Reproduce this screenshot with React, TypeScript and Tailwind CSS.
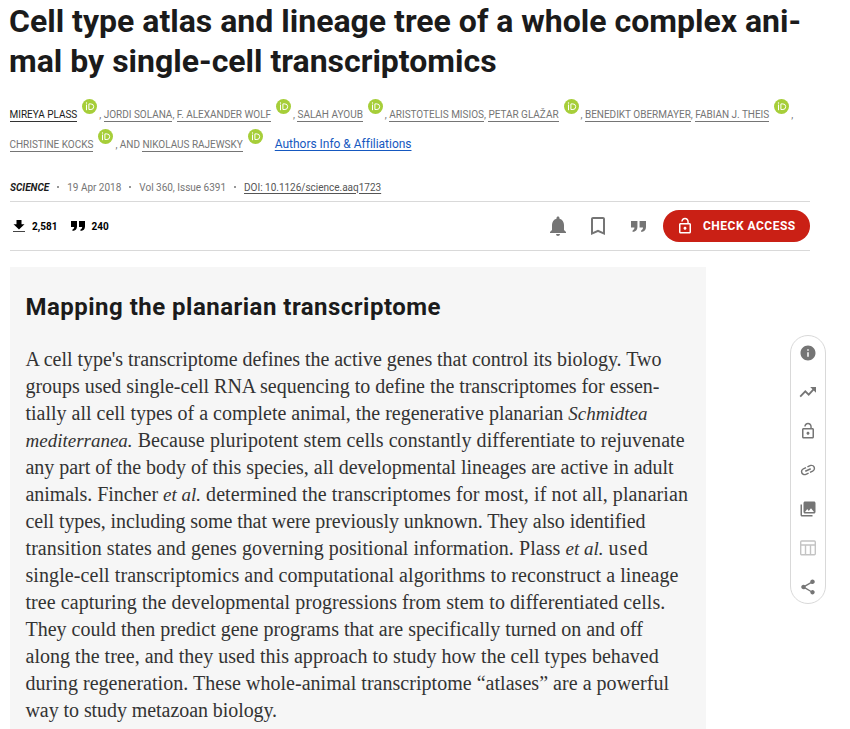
import React from "react";
import {
  MdBookmarkBorder,
  MdInfo,
  MdInsertLink,
  MdLockOpen,
  MdNotifications,
  MdPhotoLibrary,
  MdShare,
} from "react-icons/md";

function Orcid() {
  return (
    <svg viewBox="0 0 15 15" className="mb-[17px] ml-[5px] mr-0.5 size-[15px] shrink-0">
      <circle cx="7.5" cy="7.5" r="7.5" fill="#a6ce39" />
      <g fill="none" stroke="#fff">
        <path d="M4.5 5.6v5.6" strokeWidth="1" />
        <path d="M6.9 4.9h2a2.7 2.7 0 0 1 0 5.6h-2z" strokeWidth="1" />
      </g>
      <circle cx="4.5" cy="4" r="0.65" fill="#fff" />
    </svg>
  );
}

function Author({ name, orcid, last, dark }: { name: string; orcid?: boolean; last?: boolean; dark?: boolean }) {
  return (
    <>
      <a className={dark ? "border-b border-[#333] leading-3 text-[#1b1b1b]" : "border-b border-[#757575] leading-3"}>{name}</a>
      {orcid && <Orcid />}
      {!last && <span className="leading-3">,&nbsp;</span>}
    </>
  );
}

function Quotes({ className }: { className: string }) {
  return (
    <svg viewBox="0 0 14 10" preserveAspectRatio="none" className={className} fill="currentColor">
      <path d="M0 0h6v5.4C6 8 4.4 9.700 1.500 10V8.600C2.700 8 3.200 7.200 3.200 6H0z" />
      <path d="M8 0h6v5.400C14 8 12.400 9.700 9.500 10V8.600C10.700 8 11.200 7.200 11.200 6H8z" />
    </svg>
  );
}

function Download() {
  return (
    <svg viewBox="0 0 12 13" className="h-[13px] w-3">
      <path d="M3.500 0h5v4.200H11.500L6 9.500L0.500 4.200H3.500z" fill="#000" />
      <path d="M0 11.500h12" stroke="#444" />
    </svg>
  );
}

function Trend() {
  return (
    <svg viewBox="0 0 18 18" fill="none" stroke="currentColor" strokeWidth="1.8">
      <path d="M1.200 13.600L6.300 8.300L9.700 11.600L15 5.800" />
      <path d="M11.200 4h5.800v5.800z" fill="currentColor" stroke="none" />
    </svg>
  );
}

function Table() {
  return (
    <svg viewBox="0 0 16 16" className="size-4" fill="none" stroke="#c4c4c4" strokeWidth="1.400">
      <rect x="0.700" y="1" width="14.600" height="13.800" rx="1" />
      <path d="M1 5h14M5.500 5v9.500M10.500 5v9.500" />
    </svg>
  );
}

function Dot() {
  return <span className="mx-2 size-0.5 rounded-full bg-[#757575]" />;
}

function I({ children }: { children: React.ReactNode }) {
  return <em className="text-[19px] tracking-normal">{children}</em>;
}

export default function App() {
  return (
    <main className="relative h-[729px] w-[850px] overflow-hidden bg-white pl-2.5 font-['Roboto',sans-serif] text-[#757575]">
      <h1 className="-ml-px whitespace-nowrap pt-px text-[32px] font-bold leading-10 text-[#1b1b1b]">
        Cell type atlas and lineage tree of a whole complex ani-
        <br />
        mal by single-cell transcriptomics
      </h1>

      <section className="mt-[19px] whitespace-nowrap text-[10px] tracking-[-0.02px]">
        <div className="-ml-[0.5px] flex h-[30px] items-center">
          <Author name="MIREYA PLASS" orcid dark />
          <Author name="JORDI SOLANA" />
          <Author name="F. ALEXANDER WOLF" orcid />
          <Author name="SALAH AYOUB" orcid />
          <Author name="ARISTOTELIS MISIOS" />
          <Author name="PETAR GLAŽAR" orcid />
          <Author name="BENEDIKT OBERMAYER" />
          <Author name="FABIAN J. THEIS" orcid />
        </div>
        <div className="-ml-[0.5px] flex h-[30px] items-center">
          <Author name="CHRISTINE KOCKS" orcid />
          <span className="leading-3">AND&nbsp;</span>
          <Author name="NIKOLAUS RAJEWSKY" orcid last />
          <a className="-mt-0.5 ml-2.5 text-xs text-[#1558c0] underline underline-offset-2">Authors Info &amp; Affiliations</a>
        </div>
      </section>

      <div className="mt-[19px] flex h-[23px] w-[800px] items-start border-b border-[#d9d9d9]">
        <div className="flex h-4 items-center text-[10px] tracking-[-0.01px]">
          <b className="italic text-[#1b1b1b]">SCIENCE</b>
          <Dot />
          <span>19 Apr 2018</span>
          <Dot />
          <span>Vol 360, Issue 6391</span>
          <Dot />
          <a className="text-[#555] underline underline-offset-2">DOI: 10.1126/science.aaq1723</a>
        </div>
      </div>

      <div className="flex h-[49px] w-[800px] items-center border-b border-[#d9d9d9] text-[10px] font-bold text-black">
        <div className="ml-[3px] flex items-center">
          <Download />
          <span className="ml-[7px]">2,581</span>
          <Quotes className="ml-3.5 h-[10px] w-3.5" />
          <span className="ml-1.5">240</span>
        </div>
        <div className="ml-auto flex items-center text-[#757575]">
          <MdNotifications className="size-6" />
          <MdBookmarkBorder className="ml-4 size-6" />
          <Quotes className="ml-[21px] mt-px h-[11px] w-[15px]" />
          <button className="ml-[17px] flex h-8 w-[147px] items-center rounded-full bg-[#ca2015] pl-[13px] text-xs font-bold tracking-[0.5px] text-white">
            <MdLockOpen className="size-[18px]" />
            <span className="ml-[9px] whitespace-nowrap">CHECK ACCESS</span>
          </button>
        </div>
      </div>

      <article className="mt-4 h-[462px] w-[696px] bg-[#f6f6f6] pl-[15.5px] pt-6">
        <h2 className="text-2xl font-bold leading-8 tracking-[0.48px] text-[#1b1b1b]">Mapping the planarian transcriptome</h2>
        <div className="mt-[23px] whitespace-nowrap font-['Liberation_Serif',serif] text-[20px] leading-[27px] text-[#333] *:h-[27px]">
          <p className="tracking-[-0.035px]">A cell type's transcriptome defines the active genes that control its biology. Two</p>
          <p className="tracking-[-0.033px]">groups used single-cell RNA sequencing to define the transcriptomes for essen-</p>
          <p className="tracking-[-0.005px]">tially all cell types of a complete animal, the regenerative planarian <I>Schmidtea</I></p>
          <p className="tracking-[0.069px]"><I>mediterranea.</I> Because pluripotent stem cells constantly differentiate to rejuvenate</p>
          <p className="tracking-[-0.028px]">any part of the body of this species, all developmental lineages are active in adult</p>
          <p className="tracking-[0.09px]"><span className="tracking-[-0.05px]">animals. Fincher </span><I>et al.</I> determined the transcriptomes for most, if not all, planarian</p>
          <p className="tracking-[-0.08px]">cell types, including some that were previously unknown. They also identified</p>
          <p className="tracking-[0.075px]">transition states and genes governing positional information. Plass <I>et al.</I> <span className="tracking-[0.8px]">used</span></p>
          <p className="tracking-[0.081px]">single-cell transcriptomics and computational algorithms to reconstruct a lineage</p>
          <p className="tracking-[0.06px]">tree capturing the developmental progressions from stem to differentiated cells.</p>
          <p className="tracking-[-0.01px]">They could then predict gene programs that are specifically turned on and off</p>
          <p className="tracking-[0.022px]">along the tree, and they used this approach to study how the cell types behaved</p>
          <p className="tracking-[0.032px]">during regeneration. These whole-animal transcriptome “atlases” are a powerful</p>
          <p className="tracking-[-0.07px]">way to study metazoan biology.</p>
        </div>
      </article>

      <nav className="absolute left-[790px] top-[335px] flex h-[269px] w-9 flex-col items-center gap-[21px] rounded-full border border-[#d9d9d9] bg-white pr-px pt-2 *:h-[18px] *:w-[18px] *:shrink-0">
        <MdInfo />
        <Trend />
        <MdLockOpen />
        <MdInsertLink className="-rotate-[25deg]" />
        <MdPhotoLibrary />
        <span className="flex items-center justify-center"><Table /></span>
        <MdShare />
      </nav>
    </main>
  );
}
